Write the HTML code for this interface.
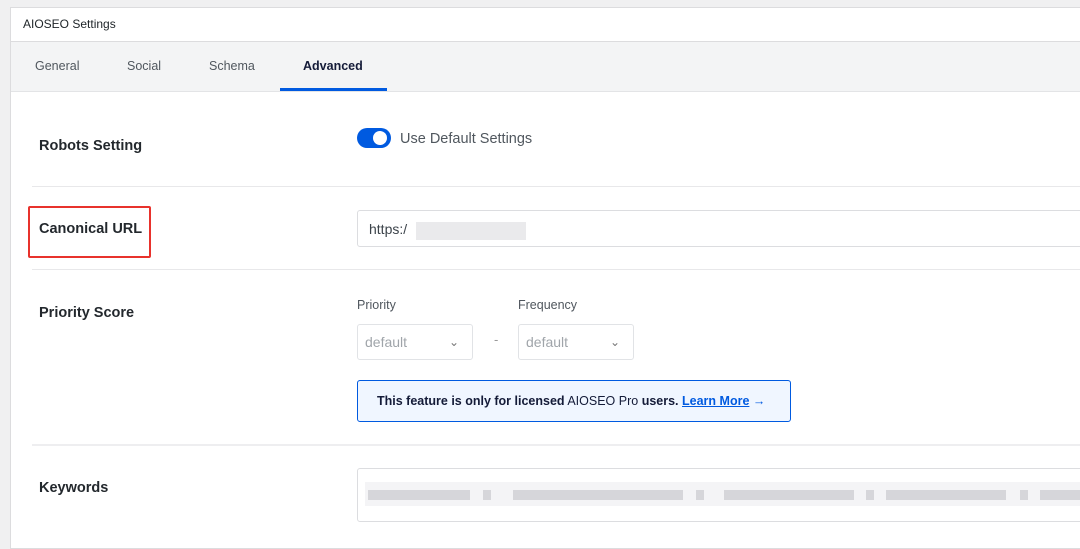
<!DOCTYPE html><html><head><style>
body{margin:0;width:1080px;height:530px;overflow:hidden;background:#f0f0f1;font-family:"Liberation Sans",sans-serif;position:relative}
.a{position:absolute}
.panel{left:10px;top:7px;width:1080px;height:540px;background:#fff;border:1px solid #dcdcde}
.lbl{font-size:14.5px;font-weight:bold;color:#23282d}
.sel{width:116px;height:36px;border:1px solid #e1e3e6;border-radius:3px;box-sizing:border-box;color:#a0a5aa;font-size:14px;line-height:34px;padding-left:7px}
.blur{background:#d6d6da;height:10px}
</style></head><body>
<div class="a panel"></div>
<div class="a" style="left:23px;top:17px;font-size:12px;color:#1d2327">AIOSEO Settings</div>
<div class="a" style="left:11px;top:41px;width:1069px;height:49px;background:#f3f4f5;border-top:1px solid #dcdcde;border-bottom:1px solid #e3e4e6"></div>
<div class="a" style="left:35px;top:59px;font-size:12.5px;color:#50575e">General</div>
<div class="a" style="left:127px;top:59px;font-size:12.5px;color:#50575e">Social</div>
<div class="a" style="left:209px;top:59px;font-size:12.5px;color:#50575e">Schema</div>
<div class="a" style="left:303px;top:59px;font-size:12.5px;color:#141b38;font-weight:bold">Advanced</div>
<div class="a" style="left:280px;top:88px;width:107px;height:3px;background:#005ae0"></div>

<div class="a lbl" style="left:39px;top:138px">Robots Setting</div>
<div class="a" style="left:357px;top:128px;width:34px;height:20px;border-radius:10px;background:#005ae0"></div>
<div class="a" style="left:373px;top:131px;width:14px;height:14px;border-radius:7px;background:#fff"></div>
<div class="a" style="left:400px;top:131px;font-size:14.5px;color:#50575e">Use Default Settings</div>
<div class="a" style="left:32px;top:186px;width:1048px;height:1px;background:#e8e8ea"></div>

<div class="a" style="left:28px;top:206px;width:119px;height:48px;border:2px solid #e8322c;border-radius:2px"></div>
<div class="a lbl" style="left:39px;top:221px">Canonical URL</div>
<div class="a" style="left:357px;top:210px;width:730px;height:37px;border:1px solid #dcdde0;border-radius:3px;box-sizing:border-box"></div>
<div class="a" style="left:369px;top:221px;font-size:14px;color:#3c434a">https:/</div>
<div class="a" style="left:416px;top:222px;width:110px;height:18px;background:#eaeaec"></div>
<div class="a" style="left:32px;top:269px;width:1048px;height:1px;background:#e8e8ea"></div>

<div class="a lbl" style="left:39px;top:305px">Priority Score</div>
<div class="a" style="left:357px;top:298px;font-size:12.5px;color:#50575e">Priority</div>
<div class="a" style="left:518px;top:298px;font-size:12.5px;color:#50575e">Frequency</div>
<div class="a sel" style="left:357px;top:324px">default</div>
<div class="a sel" style="left:518px;top:324px">default</div>
<div class="a" style="left:449px;top:335px;color:#777;font-size:12px">&#8964;</div>
<div class="a" style="left:610px;top:335px;color:#777;font-size:12px">&#8964;</div>
<div class="a" style="left:494px;top:332px;color:#999;font-size:13px">-</div>
<div class="a" style="left:357px;top:380px;width:434px;height:42px;box-sizing:border-box;border:1px solid #005ae0;border-radius:3px;background:#f0f6ff"></div>
<div class="a" style="left:377px;top:394px;font-size:12.5px;color:#141b38"><b>This feature is only for licensed</b> AIOSEO Pro <b>users.</b> <b style="color:#005ae0;text-decoration:underline">Learn More</b> <span style="color:#005ae0">&rarr;</span></div>
<div class="a" style="left:32px;top:444px;width:1048px;height:2px;background:#eeeef0"></div>

<div class="a lbl" style="left:39px;top:480px">Keywords</div>
<div class="a" style="left:357px;top:468px;width:730px;height:54px;border:1px solid #dcdde0;border-radius:3px;box-sizing:border-box"></div>
<div class="a" style="left:365px;top:482px;width:715px;height:24px;background:#f4f4f6"></div>
<div class="a blur" style="left:368px;top:490px;width:102px"></div>
<div class="a blur" style="left:483px;top:490px;width:8px"></div>
<div class="a blur" style="left:513px;top:490px;width:170px"></div>
<div class="a blur" style="left:696px;top:490px;width:8px"></div>
<div class="a blur" style="left:724px;top:490px;width:130px"></div>
<div class="a blur" style="left:866px;top:490px;width:8px"></div>
<div class="a blur" style="left:886px;top:490px;width:120px"></div>
<div class="a blur" style="left:1020px;top:490px;width:8px"></div>
<div class="a blur" style="left:1040px;top:490px;width:40px"></div>
</body></html>
